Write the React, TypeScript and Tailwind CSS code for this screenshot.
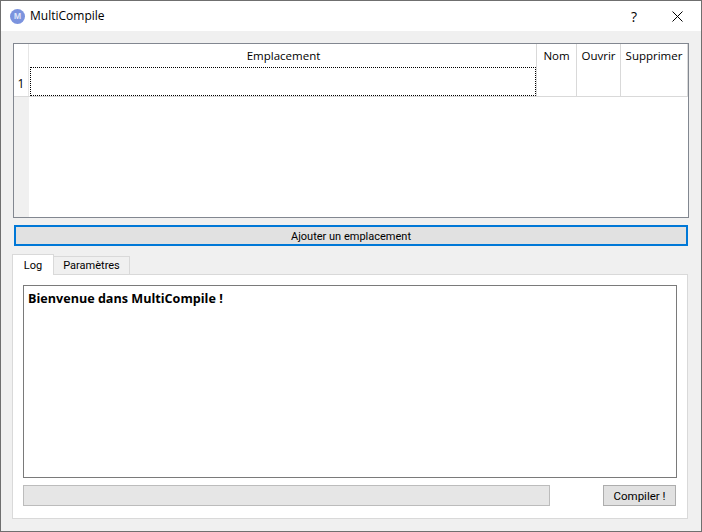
const uiFont = "[font-family:'Open_Sans','Noto_Sans',sans-serif]";
const ctlFont = "[font-family:'Roboto','Open_Sans',sans-serif]";

function AppIcon() {
  return (
    <div className="flex h-[15px] w-[15px] items-center justify-center rounded-full bg-[#7b93de]">
      <span className="text-[8px] leading-none font-bold text-[#dfe5f8]">M</span>
    </div>
  );
}

function TitleBar() {
  return (
    <div className="flex h-[30px] shrink-0 items-center bg-white pl-[9px]">
      <AppIcon />
      <span className="ml-[5px] text-[12px] text-black">MultiCompile</span>
      <span className="ml-auto mr-[35px] text-[14px] text-black">?</span>
      <svg width="11" height="11" viewBox="0 0 11 11" className="mr-[18px]">
        <path d="M0.5 0.5 L10.5 10.5 M10.5 0.5 L0.5 10.5" stroke="#000" strokeWidth="1" fill="none" />
      </svg>
    </div>
  );
}

function LocationTable() {
  return (
    <div className="flex h-[175px] shrink-0 flex-col border border-[#828790] bg-white">
      <div className="flex h-[52px] shrink-0 text-[11.5px] text-black">
        <div className="flex w-[15px] shrink-0 flex-col border-r border-[#e6e6e6]">
          <div className="h-[23px]" />
          <div className="flex flex-1 items-center justify-center pt-[4px] text-[12px]">1</div>
        </div>
        <div className="flex w-[508px] shrink-0 flex-col border-r border-[#d9d9d9]">
          <div className="flex h-[23px] items-center justify-center pl-[2px]">Emplacement</div>
          <div className="ml-px h-[29px] rounded-[1px] border border-dotted border-black" />
        </div>
        <div className="flex w-[40px] shrink-0 justify-center border-r border-[#d9d9d9] pt-[3px]">Nom</div>
        <div className="flex w-[44px] shrink-0 justify-center border-r border-[#d9d9d9] pt-[3px]">Ouvrir</div>
        <div className="flex flex-1 justify-center border-r border-[#d9d9d9] pt-[3px]">Supprimer</div>
      </div>
      <div className="flex flex-1 border-t border-[#d9d9d9]">
        <div className="w-[15px] bg-[#f0f0f0]" />
      </div>
    </div>
  );
}

function Tabs() {
  return (
    <div className={`flex h-[20px] items-end text-[11px] text-black ${ctlFont}`}>
      <div className="z-10 -mb-px flex h-[21px] w-[42px] items-center justify-center border border-b-0 border-[#d9d9d9] bg-white pt-[2px]">Log</div>
      <div className="-mb-px flex h-[19px] w-[76px] items-center justify-center border border-l-0 border-[#d9d9d9] bg-[#f0f0f0] pt-[2px]">Paramètres</div>
    </div>
  );
}

function LogPane() {
  return (
    <div className="flex h-[245px] flex-col border border-[#d9d9d9] bg-white px-[10px] pt-[10px]">
      <div className="h-[193px] shrink-0 border border-[#7a7a7a] bg-white px-[4px] py-[4px] text-[12.6px] leading-[17px] font-bold text-black">
        Bienvenue dans MultiCompile !
      </div>
      <div className="mt-[7px] flex items-stretch">
        <div className="h-[21px] w-[527px] border border-[#bcbcbc] bg-[#e6e6e6]" />
        <button className={`ml-auto mr-px h-[21px] w-[73px] border border-[#adadad] bg-[#e1e1e1] pt-[2px] text-[11.5px] text-black ${ctlFont}`}>Compiler !</button>
      </div>
    </div>
  );
}

export default function App() {
  return (
    <div className={`flex h-[532px] w-[702px] flex-col border border-[#6f6f6f] bg-[#f0f0f0] ${uiFont}`}>
      <TitleBar />
      <div className="flex flex-1 flex-col pl-[12px] pt-[12px]">
        <div className="w-[676px]">
          <LocationTable />
        </div>
        <button className={`ml-px mt-[7px] h-[21px] w-[674px] shrink-0 border-2 border-[#0078d7] bg-[#e1e1e1] pt-[2px] text-[11px] text-black ${ctlFont}`}>Ajouter un emplacement</button>
        <div className="-ml-px mt-[8px] w-[676px]">
          <Tabs />
          <LogPane />
        </div>
      </div>
    </div>
  );
}
